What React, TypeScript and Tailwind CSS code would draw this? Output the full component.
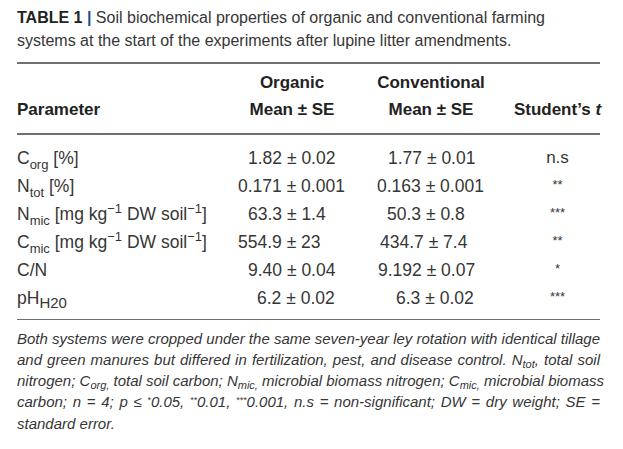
import React from "react";

type Row = {
  p: React.ReactNode;
  a: string;
  ac: string;
  b: string;
  bc: string;
  t: string;
  tc: string;
};

const rows: Row[] = [
  {
    p: (
      <>
        C<sub className="text-[13px] bottom-[-5px]">org</sub> [%]
      </>
    ),
    a: "1.82 ± 0.02",
    ac: "pl-[11px]",
    b: "1.77 ± 0.01",
    bc: "pl-[41px]",
    t: "n.s",
    tc: "text-[17px]",
  },
  {
    p: (
      <>
        N<sub className="text-[13px] bottom-[-5px]">tot</sub> [%]
      </>
    ),
    a: "0.171 ± 0.001",
    ac: "pl-[1px]",
    b: "0.163 ± 0.001",
    bc: "pl-[30px]",
    t: "**",
    tc: "text-[13px] pb-[3px]",
  },
  {
    p: (
      <>
        N<sub className="text-[13px] bottom-[-5px]">mic</sub> [mg kg
        <sup className="text-[13px] top-[-7px]">−1</sup> DW soil
        <sup className="text-[13px] top-[-7px]">−1</sup>]
      </>
    ),
    a: "63.3 ± 1.4",
    ac: "pl-[11px]",
    b: "50.3 ± 0.8",
    bc: "pl-[40px]",
    t: "***",
    tc: "text-[13px] pb-[3px]",
  },
  {
    p: (
      <>
        C<sub className="text-[13px] bottom-[-5px]">mic</sub> [mg kg
        <sup className="text-[13px] top-[-7px]">−1</sup> DW soil
        <sup className="text-[13px] top-[-7px]">−1</sup>]
      </>
    ),
    a: "554.9 ± 23",
    ac: "pl-[1px]",
    b: "434.7 ± 7.4",
    bc: "pl-[33px]",
    t: "**",
    tc: "text-[13px] pb-[3px]",
  },
  {
    p: <>C/N</>,
    a: "9.40 ± 0.04",
    ac: "pl-[11px]",
    b: "9.192 ± 0.07",
    bc: "pl-[31px]",
    t: "*",
    tc: "text-[13px] pb-[3px]",
  },
  {
    p: (
      <>
        pH<sub className="text-[15px] bottom-[-4px]">H20</sub>
      </>
    ),
    a: "6.2 ± 0.02",
    ac: "pl-[20px]",
    b: "6.3 ± 0.02",
    bc: "pl-[49px]",
    t: "***",
    tc: "text-[13px] pb-[3px]",
  },
];

const lineCls = "[text-align:justify] [text-align-last:justify] whitespace-nowrap";

export default function App() {
  return (
    <div className="w-[623px] h-[449px] overflow-hidden bg-white pl-[17px] pr-[23px] font-['Liberation_Sans','Arial',sans-serif] text-[#363636]">
      {/* caption */}
      <div className="pt-[6px] text-[16px] leading-[23px]">
        <span className="font-bold text-[#222]">TABLE 1</span>{" "}
        <span className="font-bold text-[#1f4f8c]">|</span> Soil biochemical properties of organic and
        conventional farming
        <br />
        systems at the start of the experiments after lupine litter amendments.
      </div>

      <div className="mt-[10px] h-[1.5px] bg-[#707070]" />

      {/* header */}
      <div className="grid grid-cols-[220px_110px_168px_85px] pt-[6px] text-[17px] font-bold text-[#222]">
        <div className="h-[27px]" />
        <div className="flex h-[27px] items-center justify-center">Organic</div>
        <div className="flex h-[27px] items-center justify-center">Conventional</div>
        <div className="h-[27px]" />
        <div className="flex h-[27px] items-center">Parameter</div>
        <div className="flex h-[27px] items-center justify-center whitespace-nowrap">Mean ± SE</div>
        <div className="flex h-[27px] items-center justify-center whitespace-nowrap">Mean ± SE</div>
        <div className="flex h-[27px] items-center justify-center whitespace-nowrap">
          Student’s&nbsp;<i>t</i>
        </div>
      </div>

      <div className="mt-[9.5px] h-[1.5px] bg-[#707070]" />

      {/* body */}
      <div className="grid grid-cols-[220px_110px_168px_85px] pt-[9.5px] text-[17.5px]">
        {rows.map((r, i) => (
          <React.Fragment key={i}>
            <div className="flex h-[28px] items-center whitespace-nowrap">
              <span>{r.p}</span>
            </div>
            <div className={`flex h-[28px] items-center whitespace-nowrap ${r.ac}`}>{r.a}</div>
            <div className={`flex h-[28px] items-center whitespace-nowrap ${r.bc}`}>{r.b}</div>
            <div className={`flex h-[28px] items-center justify-center ${r.tc}`}>{r.t}</div>
          </React.Fragment>
        ))}
      </div>

      <div className="mt-[6.5px] h-[1.5px] bg-[#707070]" />

      {/* footnote */}
      <div className="pt-[7.5px] text-[15px] italic leading-[21.3px] text-[#363636]">
        <div className={lineCls}>
          Both systems were cropped under the same seven-year ley rotation with identical tillage
        </div>
        <div className={lineCls}>
          and green manures but differed in fertilization, pest, and disease control. N
          <sub className="text-[11px]">tot</sub>, total soil
        </div>
        <div className={lineCls}>
          nitrogen; C<sub className="text-[11px]">org,</sub> total soil carbon; N
          <sub className="text-[11px]">mic,</sub> microbial biomass nitrogen; C
          <sub className="text-[11px]">mic,</sub> microbial biomass
        </div>
        <div className={lineCls}>
          carbon; n = 4; p ≤ <sup className="text-[9px]">*</sup>0.05,{" "}
          <sup className="text-[9px]">**</sup>0.01, <sup className="text-[9px]">***</sup>0.001, n.s =
          non-significant; DW = dry weight; SE =
        </div>
        <div>standard error.</div>
      </div>
    </div>
  );
}
